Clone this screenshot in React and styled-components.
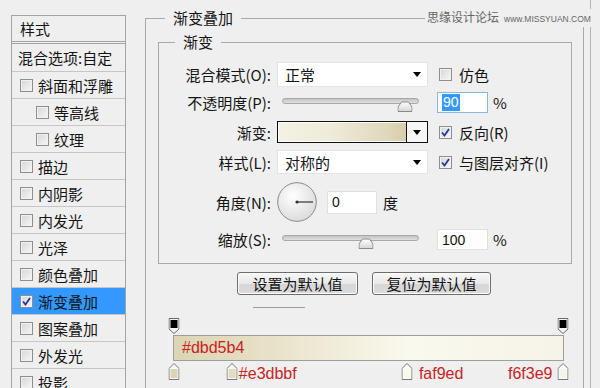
import React from 'react';
import styled, { createGlobalStyle } from 'styled-components';

const effects = [
  { name: '斜面和浮雕' },
  { name: '等高线', indent: true },
  { name: '纹理', indent: true },
  { name: '描边' },
  { name: '内阴影' },
  { name: '内发光' },
  { name: '光泽' },
  { name: '颜色叠加' },
  { name: '渐变叠加', checked: true, active: true },
  { name: '图案叠加' },
  { name: '外发光' },
  { name: '投影' },
];

const stops = [
  { pos: 0, color: '#dbd5b4' },
  { pos: 15, color: '#e3dbbf', label: '#e3dbbf', side: 'right', gap: 1 },
  { pos: 60, color: '#faf9ed', label: 'faf9ed', side: 'right', gap: 6 },
  { pos: 100, color: '#f6f3e9', label: 'f6f3e9', side: 'left', gap: 5 },
];

const CheckBox = ({ checked }) => (
  <Box>
    {checked && (
      <svg width="11" height="11" viewBox="0 0 11 11">
        <polyline points="2,5.5 4.5,8.5 9,2" fill="none" stroke="#27388c" strokeWidth="1.8" />
      </svg>
    )}
  </Box>
);

const Slider = ({ pos }) => (
  <SliderWrap>
    <Track />
    <Thumb style={{ left: `${pos}%` }}>
      <svg width="15" height="11" viewBox="0 0 15 11">
        <defs>
          <linearGradient id="thumbFill" x1="0" y1="0" x2="0" y2="1">
            <stop offset="0" stopColor="#ffffff" />
            <stop offset="1" stopColor="#d6d6d6" />
          </linearGradient>
        </defs>
        <path d="M0.5 10.5 V6 L4 1 H11 L14.5 6 V10.5 Z" fill="url(#thumbFill)" stroke="#8a8a8a" />
      </svg>
    </Thumb>
  </SliderWrap>
);

const Dial = () => (
  <svg width="40" height="40" viewBox="0 0 40 40">
    <defs>
      <radialGradient id="dialFill" cx="0.4" cy="0.35" r="0.7">
        <stop offset="0" stopColor="#ffffff" />
        <stop offset="1" stopColor="#dadada" />
      </radialGradient>
    </defs>
    <circle cx="20" cy="20" r="19.3" fill="url(#dialFill)" stroke="#8a8a8a" />
    <line x1="20" y1="20" x2="36" y2="20" stroke="#333" strokeWidth="1.2" />
    <circle cx="20" cy="20" r="1.6" fill="#333" />
  </svg>
);

const TopStop = () => (
  <svg width="11" height="16" viewBox="0 0 11 16">
    <path d="M0.5 0.5 H10.5 V11 L5.5 15.5 L0.5 11 Z" fill="#f4f4f4" stroke="#6a6a6a" />
    <rect x="2" y="2" width="7" height="8" fill="#000" />
  </svg>
);

const BottomStop = ({ color }) => (
  <svg width="11" height="17" viewBox="0 0 11 17">
    <path d="M0.5 16.5 V5.5 L5.5 0.5 L10.5 5.5 V16.5 Z" fill="#fafafa" stroke="#777" />
    <rect x="2" y="6" width="7" height="9" fill={color} />
  </svg>
);

const App = () => {
  return (
    <>
      <GlobalStyle />
      <Page>
        <StylePanel>
          <PanelTitle>样式</PanelTitle>
          <BlendRow>混合选项:自定</BlendRow>
          {effects.map((fx) => (
            <EffectRow key={fx.name} $indent={fx.indent} $active={fx.active}>
              <CheckBox checked={fx.checked} />
              <span>{fx.name}</span>
            </EffectRow>
          ))}
        </StylePanel>

        <GroupBox>
          <Legend $offset={7}>渐变叠加</Legend>
          <SubGroup>
            <Legend $offset={16}>渐变</Legend>
            <Form>
              <Row $h={25}>
                <Label>混合模式(O):</Label>
                <Select $h={25}>
                  <span>正常</span>
                  <Arrow />
                </Select>
                <RightCell>
                  <CheckLabel>
                    <CheckBox />
                    <span>仿色</span>
                  </CheckLabel>
                </RightCell>
              </Row>
              <Row $h={27}>
                <Label>不透明度(P):</Label>
                <Slider pos={90} />
                <RightCell>
                  <Field $focused>
                    <Selected>90</Selected>
                  </Field>
                  <Unit>%</Unit>
                </RightCell>
              </Row>
              <Row $h={28}>
                <Label>渐变:</Label>
                <Swatch>
                  <SwatchFill />
                  <SwatchButton>
                    <Arrow />
                  </SwatchButton>
                </Swatch>
                <RightCell>
                  <CheckLabel>
                    <CheckBox checked />
                    <span>反向(R)</span>
                  </CheckLabel>
                </RightCell>
              </Row>
              <Row $h={28}>
                <Label>样式(L):</Label>
                <Select $h={24}>
                  <span>对称的</span>
                  <Arrow />
                </Select>
                <RightCell>
                  <CheckLabel>
                    <CheckBox checked />
                    <span>与图层对齐(I)</span>
                  </CheckLabel>
                </RightCell>
              </Row>
              <Row $h={48}>
                <Label>角度(N):</Label>
                <AngleCell>
                  <Dial />
                  <Field $w={50} $h={23}>0</Field>
                  <Unit>度</Unit>
                </AngleCell>
              </Row>
              <Row $h={23}>
                <Label>缩放(S):</Label>
                <Slider pos={61} />
                <RightCell>
                  <Field>100</Field>
                  <Unit>%</Unit>
                </RightCell>
              </Row>
            </Form>
          </SubGroup>

          <ButtonRow>
            <Button $w={121}>设置为默认值</Button>
            <Button $w={119}>复位为默认值</Button>
          </ButtonRow>
          <Divider />

          <Editor>
            <StopTrack $h={16}>
              <StopMark $pos={0}><TopStop /></StopMark>
              <StopMark $pos={100}><TopStop /></StopMark>
            </StopTrack>
            <GradientBar>
              <HexText>#dbd5b4</HexText>
            </GradientBar>
            <StopTrack $h={17} $mt={2}>
              {stops.map((s) => (
                <StopMark key={s.pos} $pos={s.pos}>
                  <BottomStop color={s.color} />
                  {s.label && (
                    <StopLabel $side={s.side} $gap={s.gap}>{s.label}</StopLabel>
                  )}
                </StopMark>
              ))}
            </StopTrack>
          </Editor>
        </GroupBox>

        <EdgeLine />

        <Watermark>
          <span>思缘设计论坛</span>
          <Site>www.MISSYUAN.COM</Site>
        </Watermark>
      </Page>
    </>
  );
};

const GlobalStyle = createGlobalStyle`
  html, body {
    margin: 0;
    padding: 0;
    background: #efefef;
  }
  body {
    font-family: "Noto Sans CJK SC", "Liberation Sans", sans-serif;
    color: #141414;
  }
`;

const Page = styled.div`
  position: relative;
  display: flex;
  align-items: flex-start;
  width: 600px;
  height: 388px;
  overflow: hidden;
  background: #efefef;
`;

const StylePanel = styled.div`
  flex-shrink: 0;
  box-sizing: border-box;
  width: 115px;
  height: 400px;
  margin: 15px 0 0 11px;
  border: 1px solid #a4a4a4;
  border-bottom: none;
  font-size: 15px;
`;

const PanelTitle = styled.div`
  height: 25px;
  line-height: 25px;
  padding-left: 8px;
  border-bottom: 3px double #a4a4a4;
`;

const BlendRow = styled.div`
  height: 27px;
  line-height: 27px;
  padding-left: 6px;
  white-space: nowrap;
  overflow: hidden;
  border-bottom: 1px solid #c6c6c6;
`;

const EffectRow = styled.div`
  display: flex;
  align-items: center;
  gap: 5px;
  height: 26px;
  padding-left: ${(p) => (p.$indent ? 24 : 8)}px;
  border-bottom: 1px solid #c6c6c6;
  background: ${(p) => (p.$active ? '#3399ff' : 'transparent')};
  white-space: nowrap;
`;

const Box = styled.span`
  flex-shrink: 0;
  display: inline-flex;
  align-items: center;
  justify-content: center;
  box-sizing: border-box;
  width: 13px;
  height: 13px;
  border: 1px solid #8e8e8e;
  background: linear-gradient(135deg, #d6d6d6 0%, #f7f7f7 100%);
  box-shadow: inset 0 0 0 1px #f2f2f2;
`;

const GroupBox = styled.fieldset`
  position: relative;
  flex-shrink: 0;
  box-sizing: border-box;
  width: 439px;
  height: 400px;
  min-width: 0;
  margin: 8px 0 0 19px;
  padding: 4px 11px 0 12px;
  border: 1px solid #a9a9a9;
  border-bottom: none;
`;

const SubGroup = styled.fieldset`
  min-width: 0;
  margin: 0;
  padding: 10px 0 12px 0;
  border: 1px solid #a9a9a9;
`;

const Legend = styled.legend`
  margin-left: ${(p) => p.$offset}px;
  padding: 0 8px;
  font-size: 15px;
  line-height: 20px;
`;

const Form = styled.div`
  display: flex;
  flex-direction: column;
  gap: 2px;
`;

const Row = styled.div`
  display: grid;
  grid-template-columns: 118px 160px 1fr;
  align-items: center;
  height: ${(p) => p.$h}px;
  font-size: 15px;
`;

const Label = styled.div`
  padding-right: 6px;
  text-align: right;
  white-space: nowrap;
`;

const Select = styled.div`
  display: flex;
  align-items: center;
  justify-content: space-between;
  box-sizing: border-box;
  width: 151px;
  height: ${(p) => p.$h}px;
  padding: 0 6px 0 7px;
  background: #fff;
  border: 1px solid #e4e4e4;
`;

const Arrow = styled.span`
  width: 0;
  height: 0;
  border-left: 4.5px solid transparent;
  border-right: 4.5px solid transparent;
  border-top: 5px solid #000;
`;

const RightCell = styled.div`
  display: flex;
  align-items: center;
  gap: 5px;
`;

const CheckLabel = styled.label`
  display: flex;
  align-items: center;
  gap: 7px;
  padding-left: 2px;
  white-space: nowrap;
`;

const Field = styled.div`
  display: flex;
  align-items: center;
  box-sizing: border-box;
  width: ${(p) => p.$w || 51}px;
  height: ${(p) => p.$h || 21}px;
  padding-left: 4px;
  background: #fff;
  border: 1px solid ${(p) => (p.$focused ? '#8db4dc' : '#e0e0e0')};
  font-family: "Liberation Sans", sans-serif;
  font-size: 14px;
  color: #111;
`;

const Selected = styled.span`
  padding: 0 1px;
  line-height: 17px;
  background: #3399ff;
  color: #fff;
`;

const Unit = styled.span`
  font-size: 15px;
`;

const SliderWrap = styled.div`
  position: relative;
  width: 137px;
  height: 20px;
  margin-left: 5px;
`;

const Track = styled.div`
  position: absolute;
  top: 5px;
  left: 0;
  right: 0;
  height: 6px;
  box-sizing: border-box;
  border: 1px solid #a8a8a8;
  border-radius: 3px;
  background: linear-gradient(#c4c4c4, #e0e0e0);
`;

const Thumb = styled.div`
  position: absolute;
  top: 8px;
  transform: translateX(-50%);
  line-height: 0;
`;

const Swatch = styled.div`
  display: flex;
  box-sizing: border-box;
  width: 151px;
  height: 22px;
  border: 1px solid #111;
`;

const SwatchFill = styled.div`
  flex: 1;
  border: 1px solid #fff;
  border-right: none;
  background: linear-gradient(to right, #f4f1e4 0%, #efebd9 40%, #e2dabf 80%, #d7cfab 100%);
`;

const SwatchButton = styled.div`
  display: flex;
  align-items: center;
  justify-content: center;
  width: 20px;
  border-left: 1px solid #111;
  background: #f6f6f6;
`;

const AngleCell = styled.div`
  grid-column: 2 / 4;
  display: flex;
  align-items: center;
  gap: 6px;

  & > svg {
    margin-right: 4px;
  }
`;

const ButtonRow = styled.div`
  display: flex;
  gap: 14px;
  margin-top: 8px;
  padding-left: 79px;
`;

const Button = styled.div`
  box-sizing: border-box;
  width: ${(p) => p.$w}px;
  height: 23px;
  line-height: 21px;
  text-align: center;
  font-size: 15px;
  border: 1px solid #6e6e6e;
  border-radius: 3px;
  background: linear-gradient(#f8f8f8 0%, #e8e8e8 50%, #d6d6d6 51%, #dcdcdc 100%);
  box-shadow: inset 0 0 0 1px #fbfbfb;
`;

const Divider = styled.div`
  width: 52px;
  height: 1px;
  margin: 12px 0 0 95px;
  background: #9c9c9c;
`;

const Editor = styled.div`
  width: 391px;
  margin: 10px 0 0 15px;
`;

const StopTrack = styled.div`
  position: relative;
  height: ${(p) => p.$h}px;
  margin: ${(p) => p.$mt || 0}px 1px 0;
`;

const StopMark = styled.div`
  position: absolute;
  top: 0;
  left: ${(p) => p.$pos}%;
  transform: translateX(-50%);
  line-height: 0;
`;

const StopLabel = styled.span`
  position: absolute;
  top: 2px;
  ${(p) => (p.$side === 'right' ? `left: calc(100% + ${p.$gap}px);` : `right: calc(100% + ${p.$gap}px);`)}
  font-family: "Liberation Sans", sans-serif;
  font-size: 16px;
  line-height: 17px;
  color: #c8231f;
  white-space: nowrap;
`;

const GradientBar = styled.div`
  display: flex;
  align-items: center;
  box-sizing: border-box;
  height: 26px;
  margin-top: 1px;
  padding-left: 8px;
  border: 1px solid #9e9e9e;
  background: linear-gradient(to right, #dbd5b4 0%, #e3dbbf 15%, #faf9ed 60%, #f6f3e9 100%);
`;

const HexText = styled.span`
  font-family: "Liberation Sans", sans-serif;
  font-size: 16px;
  color: #c8231f;
`;

const EdgeLine = styled.div`
  flex-shrink: 0;
  width: 1px;
  height: 388px;
  margin-left: 6px;
  background: #b4b4b4;
`;

const Watermark = styled.div`
  position: absolute;
  top: 9px;
  left: 425px;
  display: flex;
  align-items: baseline;
  gap: 5px;
  padding: 0 2px;
  background: #efefef;
  color: #666;
  font-size: 12px;
  line-height: 16px;
`;

const Site = styled.span`
  font-family: "Liberation Sans", sans-serif;
  font-size: 8.5px;
`;

export default App;
